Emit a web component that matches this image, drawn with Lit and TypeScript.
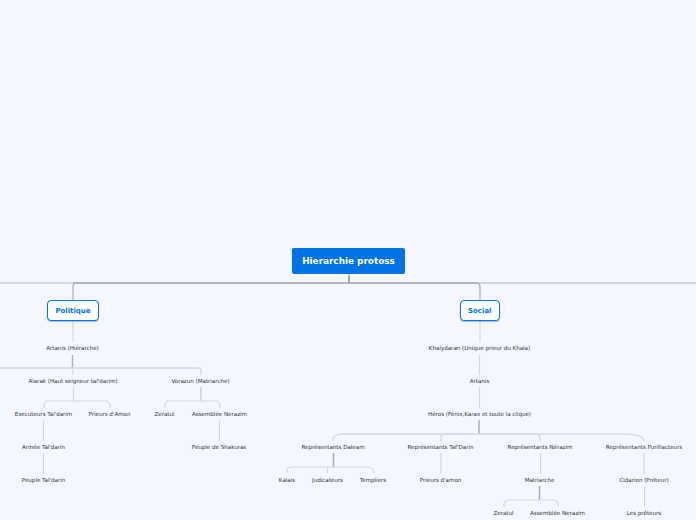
import { LitElement, html, css, svg } from "lit";
import { customElement } from "lit/decorators.js";

const labels: [string, number, number][] = [
  ["Artanis (Hiérarche)", 72.5, 348],
  ["Alarak (Haut seigneur tal'darim)", 73, 381],
  ["Vorazun (Matriarche)", 200.5, 381],
  ["Executeurs Tal'darim", 43.5, 414],
  ["Prieurs d'Amon", 109.5, 414],
  ["Zeratul", 164.5, 414],
  ["Assemblée Nerazim", 219.5, 414],
  ["Armée Tal'darin", 43.5, 447],
  ["Peuple de Shakuras", 219, 447],
  ["Peuple Tal'darin", 43.5, 480],
  ["Khalydaran (Unique prieur du Khala)", 479.5, 348],
  ["Artanis", 479.5, 381],
  ["Héros (Fénix,Karax et toute la clique)", 479.5, 414],
  ["Représentants Daleam", 333, 447],
  ["Représentants Taf'Darin", 440.5, 447],
  ["Représentants Nérazim", 540, 447],
  ["Représentants Purifiacteurs", 644, 447],
  ["Kalais", 287, 480],
  ["Judicateurs", 327.5, 480],
  ["Templiers", 373, 480],
  ["Prieurs d'amon", 440.5, 480],
  ["Matriarche", 539.5, 480],
  ["Cidarion (Préteur)", 644, 480],
  ["Zeratul", 503.5, 513],
  ["Assemblée Nerazim", 557.5, 513],
  ["Les prêteurs", 644, 513],
];

// [path, colour, width]
const links: [string, string, number][] = [
  ["M0 283H73", "#d0d0d2", 1.6],
  ["M73 283H349", "#b6b6b8", 1.8],
  ["M349 283H476", "#b6b6b8", 1.8],
  ["M476 283H696", "#c8c8ca", 1.6],
  ["M349 275V283", "#a8a8a8", 2],
  ["M73 300V287Q73 283 77 283", "#bcbcbe", 1.4],
  ["M480 300V287Q480 283 476 283", "#b4b4b6", 1.4],
  ["M73 321V342", "#dcdde2", 1.4],
  ["M72.5 355V368", "#b4b4b6", 1.4],
  ["M0 368H198Q201 368 201 371V375", "#d8d9de", 1.4],
  ["M73 368V375", "#d6d7dc", 1.2],
  ["M73.5 387V401", "#d8d9de", 1.2],
  ["M44 408V405Q44 401 48 401H105Q110 401 110 405V408", "#d6d7dc", 1.1],
  ["M201 387V401", "#c6c7cc", 1.2],
  ["M165 408V405Q165 401 169 401H215Q220 401 220 405V408", "#d6d7dc", 1.1],
  ["M43.5 420V441", "#d6d7dc", 1.1],
  ["M43.5 453V474", "#d6d7dc", 1.1],
  ["M219.5 420V441", "#d6d7dc", 1.1],
  ["M480 321V342", "#dcdde2", 1.4],
  ["M479.5 355V375", "#d6d7dc", 1.1],
  ["M479.5 387V408", "#d6d7dc", 1.1],
  ["M479 420V434", "#a8a8ac", 1.4],
  ["M333 441V439Q334 434 345 434H470", "#d8d9de", 1.3],
  ["M441 441V438Q441 434 446 434H535Q540 434 540 438V441", "#d8d9de", 1.3],
  ["M480 434H625Q644 435 644 441", "#dcdde2", 1.3],
  ["M333.5 453V467", "#a8a8ac", 1.4],
  ["M287 473V471Q287 467 292 467H367Q374 467 374 473", "#d6d7dc", 1.1],
  ["M327.5 467V473", "#d8d9de", 1.1],
  ["M441 453V474", "#d6d7dc", 1.2],
  ["M540.5 453V474", "#d6d7dc", 1.1],
  ["M539.5 486V500", "#a8a8ac", 1.4],
  ["M504 507V504Q504 500 510 500H552Q558 500 558 504V507", "#d6d7dc", 1.1],
  ["M644 453V474", "#d6d7dc", 1.1],
  ["M644.5 486V507", "#d6d7dc", 1.1],
];

@customElement("app-root")
export class AppRoot extends LitElement {
  static styles = css`
    :host {
      display: block;
      width: 696px;
      height: 520px;
    }
    .canvas {
      position: relative;
      width: 696px;
      height: 520px;
      overflow: hidden;
      background: #f4f7ff;
      font-family: "DejaVu Sans", sans-serif;
    }
    .links {
      position: absolute;
      inset: 0;
      width: 696px;
      height: 520px;
    }
    .links path {
      fill: none;
    }
    .node {
      position: absolute;
      transform: translate(-50%, -50%);
      white-space: nowrap;
      font-size: 5.6px;
      letter-spacing: -0.03px;
      line-height: 8px;
      color: #34343c;
    }
    .root {
      position: absolute;
      left: 292px;
      top: 248px;
      width: 113px;
      height: 26px;
      box-sizing: border-box;
      display: flex;
      align-items: center;
      justify-content: center;
      border-radius: 2px;
      background: #0073e6;
      color: #fff;
      font-size: 8.9px;
      font-weight: 700;
    }
    .branch {
      position: absolute;
      top: 300px;
      height: 21px;
      box-sizing: border-box;
      display: flex;
      align-items: center;
      justify-content: center;
      border: 1.5px solid #0073e6;
      border-radius: 4px;
      background: #fff;
      color: #0073e6;
      font-size: 7px;
      font-weight: 700;
      box-shadow: 0 1px 1px rgba(0, 60, 130, 0.3);
    }
    .politique {
      left: 47px;
      width: 52px;
    }
    .social {
      left: 459.5px;
      width: 40.5px;
    }
  `;

  render() {
    return html`<div class="canvas">
      <svg class="links" viewBox="0 0 696 520">
        ${links.map(
          ([d, c, w]) => svg`<path d=${d} stroke=${c} stroke-width=${w}></path>`
        )}
      </svg>
      <div class="root">Hierarchie protoss</div>
      <div class="branch politique">Politique</div>
      <div class="branch social">Social</div>
      ${labels.map(
        ([t, x, y]) =>
          html`<div class="node" style="left:${x}px;top:${y}px">${t}</div>`
      )}
    </div>`;
  }
}
